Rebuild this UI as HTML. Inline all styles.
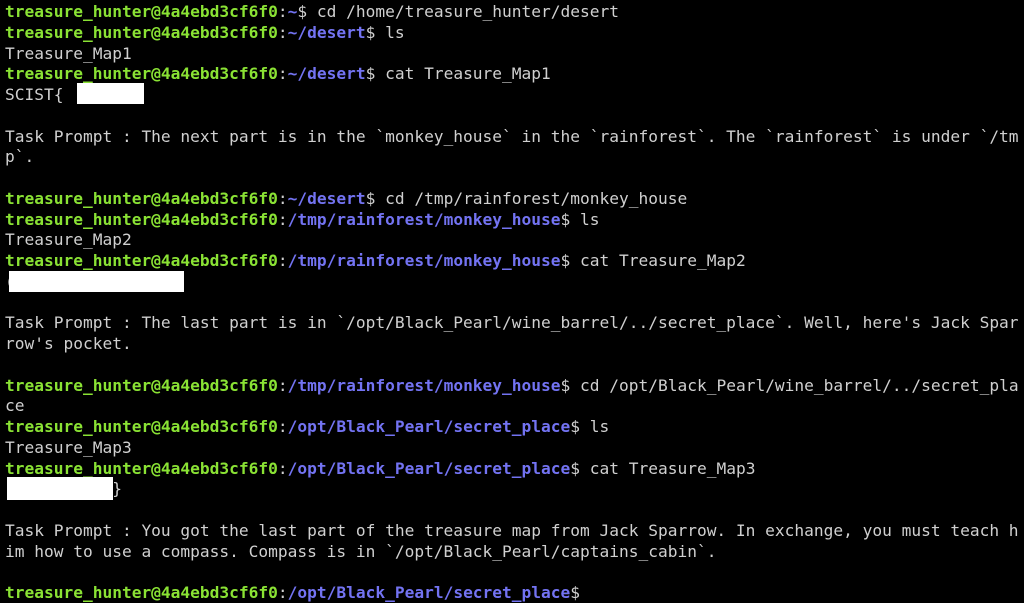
<!DOCTYPE html>
<html><head><meta charset="utf-8"><style>
html,body{margin:0;padding:0;background:#000;width:1024px;height:603px;overflow:hidden}
pre{margin:0;padding:2px 0 0 5px;font-family:"DejaVu Sans Mono","Liberation Mono",monospace;font-size:16.2px;line-height:20.75px;color:#d0d0d0;white-space:pre}
.g{color:#8ae234;font-weight:bold}
.b{color:#7373f2;font-weight:bold}
.w{position:absolute;background:#fff}
</style></head><body>
<pre><span class="g">treasure_hunter@4a4ebd3cf6f0</span>:<span class="b">~</span>$ cd /home/treasure_hunter/desert
<span class="g">treasure_hunter@4a4ebd3cf6f0</span>:<span class="b">~/desert</span>$ ls
Treasure_Map1
<span class="g">treasure_hunter@4a4ebd3cf6f0</span>:<span class="b">~/desert</span>$ cat Treasure_Map1
SCIST{

Task Prompt : The next part is in the `monkey_house` in the `rainforest`. The `rainforest` is under `/tm
p`.

<span class="g">treasure_hunter@4a4ebd3cf6f0</span>:<span class="b">~/desert</span>$ cd /tmp/rainforest/monkey_house
<span class="g">treasure_hunter@4a4ebd3cf6f0</span>:<span class="b">/tmp/rainforest/monkey_house</span>$ ls
Treasure_Map2
<span class="g">treasure_hunter@4a4ebd3cf6f0</span>:<span class="b">/tmp/rainforest/monkey_house</span>$ cat Treasure_Map2
(

Task Prompt : The last part is in `/opt/Black_Pearl/wine_barrel/../secret_place`. Well, here's Jack Spar
row's pocket.

<span class="g">treasure_hunter@4a4ebd3cf6f0</span>:<span class="b">/tmp/rainforest/monkey_house</span>$ cd /opt/Black_Pearl/wine_barrel/../secret_pla
ce
<span class="g">treasure_hunter@4a4ebd3cf6f0</span>:<span class="b">/opt/Black_Pearl/secret_place</span>$ ls
Treasure_Map3
<span class="g">treasure_hunter@4a4ebd3cf6f0</span>:<span class="b">/opt/Black_Pearl/secret_place</span>$ cat Treasure_Map3
           }

Task Prompt : You got the last part of the treasure map from Jack Sparrow. In exchange, you must teach h
im how to use a compass. Compass is in `/opt/Black_Pearl/captains_cabin`.

<span class="g">treasure_hunter@4a4ebd3cf6f0</span>:<span class="b">/opt/Black_Pearl/secret_place</span>$ </pre>
<div class="w" style="left:77px;top:83px;width:67px;height:21px"></div>
<div class="w" style="left:9px;top:271px;width:175px;height:21px"></div>
<div class="w" style="left:7px;top:477px;width:106px;height:23px"></div>
</body></html>
